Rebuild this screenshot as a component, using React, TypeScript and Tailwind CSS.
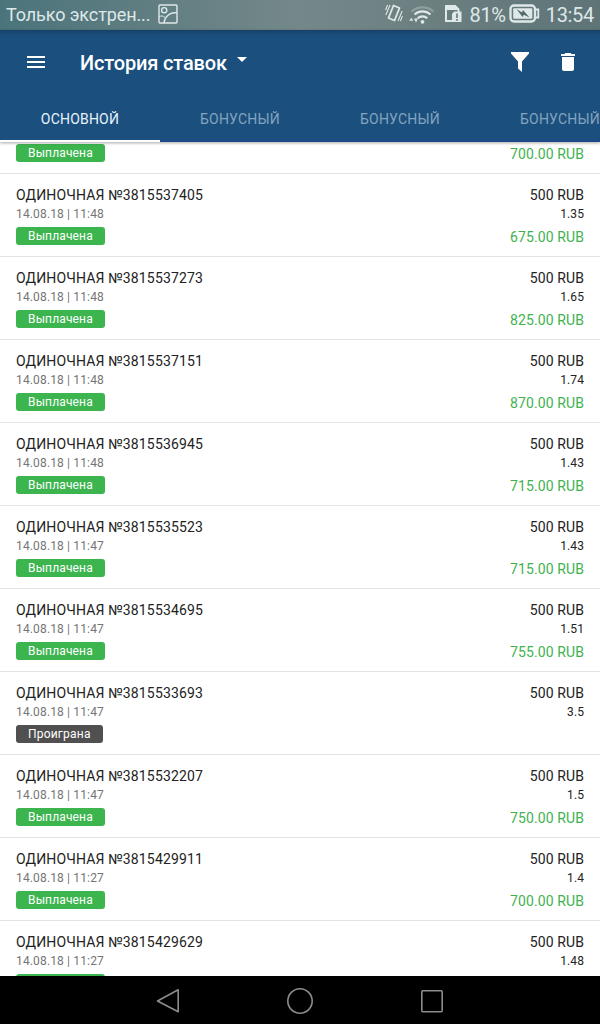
type Bet = {
  id: string
  time: string
  odds: string
  payout?: string
}

const BETS: Bet[] = [
  { id: "3815537405", time: "11:48", odds: "1.35", payout: "675.00" },
  { id: "3815537273", time: "11:48", odds: "1.65", payout: "825.00" },
  { id: "3815537151", time: "11:48", odds: "1.74", payout: "870.00" },
  { id: "3815536945", time: "11:48", odds: "1.43", payout: "715.00" },
  { id: "3815535523", time: "11:47", odds: "1.43", payout: "715.00" },
  { id: "3815534695", time: "11:47", odds: "1.51", payout: "755.00" },
  { id: "3815533693", time: "11:47", odds: "3.5" },
  { id: "3815532207", time: "11:47", odds: "1.5", payout: "750.00" },
  { id: "3815429911", time: "11:27", odds: "1.4", payout: "700.00" },
  { id: "3815429629", time: "11:27", odds: "1.48" , payout: "740.00" },
]

const TABS = ["ОСНОВНОЙ", "БОНУСНЫЙ", "БОНУСНЫЙ", "БОНУСНЫЙ"]

const StatusBar = () => (
  <div className="h-[30px] shrink-0 flex items-center pl-[6px] pr-[6px] text-[#dfe8e9] bg-linear-to-r from-[#4a747b] via-[#758889] to-[#5f7477]">
    <span className="text-[18px] leading-[28px] tracking-[-0.1px] whitespace-nowrap">Только экстрен...</span>
    <svg className="ml-[8px] -mt-[3px]" width="20" height="20" viewBox="0 0 20 20" fill="none" stroke="currentColor" strokeWidth="1.4">
      <rect x="1" y="1" width="18" height="18" rx="1" />
      <circle cx="6.2" cy="6.2" r="2.6" />
      <path d="M6 19c.5-6 5-10.500 13-10.500" />
      <path d="M1 13c2-1.500 4-1.500 6 .5" strokeWidth="1" />
    </svg>
    <svg className="ml-auto -mt-[4px]" width="18" height="22" viewBox="0 0 18 22" fill="none" stroke="currentColor">
      <path d="M8.500 3.500 14.500 6 9.500 18.500 3.500 16z" strokeWidth="1.800" strokeLinejoin="round" />
      <path d="M5 3 .8 13M2.500 3 .6 8M17.200 9 13 19M17.400 14 15.400 19" strokeWidth="1.100" />
    </svg>
    <svg className="ml-[6px] -mt-[1px]" width="26" height="20" viewBox="0 0 26 20" fill="none" stroke="currentColor" strokeWidth="2.200">
      <path d="M2.500 6.500a16.500 16.500 0 0 1 22 0" opacity=".3" />
      <path d="M5.500 9.500a12 12 0 0 1 16 0M8.700 13.200a7 7 0 0 1 9.600 0" />
      <circle cx="13.500" cy="16.800" r="1.900" fill="currentColor" stroke="none" />
      <path d="M.3 15.800 2.300 12.800 4.300 15.800zM5 13.500 9 13.500 7 17.500z" fill="currentColor" stroke="none" />
    </svg>
    <svg className="ml-[9px] -mt-[4px]" width="18" height="19" viewBox="0 0 18 19" fill="none" stroke="currentColor" strokeWidth="2">
      <path d="M8 17H2V2h9l3.500 3.500V8" />
      <path d="M2 1h9l4 4v1H2z" fill="currentColor" stroke="none" />
      <path d="M8 10l2-2.500h7.500V18H8z" fill="currentColor" stroke="none" />
      <path d="M13 9.500v4.500M13 15v1.700" stroke="#62777a" strokeWidth="1.600" />
    </svg>
    <span className="ml-[7px] text-[20px] leading-[30px] tracking-[-0.3px]">81%</span>
    <svg className="ml-[3px] -mt-[3px]" width="31" height="19" viewBox="0 0 31 19" fill="none" stroke="currentColor">
      <rect x="1.500" y="1.500" width="24.500" height="16" rx="3.500" strokeWidth="2.300" />
      <rect x="4.200" y="4.200" width="19.100" height="10.600" rx="1" fill="currentColor" stroke="none" />
      <path d="M27 5.500h2.300v8H27" strokeWidth="1.800" />
      <path d="M7.500 5 13 8.500 14 6 20.500 13.500 14.800 10.800 13.500 13z" fill="#536a6d" stroke="none" />
    </svg>
    <span className="ml-[6px] text-[20px] leading-[30px] tracking-[-0.3px]">13:54</span>
  </div>
)

const Header = () => (
  <header className="relative z-10 h-[112px] shrink-0 flex flex-col bg-[#1b4f7e] text-white shadow-[0_1px_3px_rgba(0,0,0,0.35)]">
    <div className="h-[64px] flex items-center pl-[27px] pr-[25px] bg-linear-to-b from-[#164167] to-[#1b4f7e] to-8%">
      <svg width="18" height="12" viewBox="0 0 18 12" fill="currentColor">
        <path d="M0 0h18v2H0zM0 5h18v2H0zM0 10h18v2H0z" />
      </svg>
      <h1 className="ml-[35px] pt-[2px] text-[20px] font-medium leading-[24px] tracking-[-0.15px]">История ставок</h1>
      <svg className="ml-[10px] -mt-[5px]" width="10" height="5" viewBox="0 0 10 5" fill="currentColor">
        <path d="M0 0h10L5 5z" />
      </svg>
      <svg className="ml-auto" width="18" height="20" viewBox="0 0 18 20" fill="currentColor">
        <path d="M0 0h18v1.500L11 9.500V20L7 16.500V9.500L0 1.500z" />
      </svg>
      <svg className="ml-[32px]" width="14" height="18" viewBox="0 0 14 18" fill="currentColor">
        <path d="M1 16c0 1.100.9 2 2 2h8c1.100 0 2-.9 2-2V4H1v12zM14 1h-3.500l-1-1h-5l-1 1H0v2h14V1z" />
      </svg>
    </div>
    <nav className="h-[48px] flex overflow-hidden text-[14px] leading-[20px] tracking-[0.2px]">
      {TABS.map((tab, i) => (
        <div
          key={i}
          className={i === 0
            ? "w-[160px] shrink-0 pt-[15px] text-center text-[#e8f3fa] border-b-2 border-white"
            : "w-[160px] shrink-0 pt-[15px] text-center text-[#84a4bf] border-b-3 border-[#1c4a86]"}
        >
          {tab}
        </div>
      ))}
    </nav>
  </header>
)

const Status = ({ paid }: { paid: boolean }) => paid
  ? <span className="h-[18px] px-3 rounded-[3px] bg-[#3cb54e] text-[12px] leading-[18px] tracking-[0.15px] text-white">Выплачена</span>
  : <span className="h-[18px] px-3 rounded-[3px] bg-[#505050] text-[12px] leading-[18px] tracking-[0.2px] text-white">Проиграна</span>

const Payout = ({ amount }: { amount: string }) => (
  <span className="text-[14px] leading-[20px] tracking-[0.1px] text-[#3fb250]">{amount} RUB</span>
)

const BetRow = ({ bet }: { bet: Bet }) => (
  <li className="h-[83px] shrink-0 flex justify-between px-4 pt-[11px] border-b border-[#e3e3e3]">
    <div className="flex flex-col items-start">
      <span className="text-[14px] leading-[20px] tracking-[0.15px] text-[#222]">ОДИНОЧНАЯ №{bet.id}</span>
      <span className="pt-px mb-1 text-[12px] leading-[17px] tracking-[0.15px] text-[#757575]">14.08.18 | {bet.time}</span>
      <Status paid={!!bet.payout} />
    </div>
    <div className="flex flex-col items-end">
      <span className="text-[14px] leading-[20px] tracking-[0.1px] text-[#222]">500 RUB</span>
      <span className="pt-px mb-1 text-[12px] leading-[17px] tracking-[0.1px] text-[#222]">{bet.odds}</span>
      {bet.payout && <Payout amount={bet.payout} />}
    </div>
  </li>
)

const NavigationBar = () => (
  <div className="h-12 shrink-0 flex items-center justify-center gap-[106px] bg-black text-[#8c8c8c]">
    <svg width="26" height="28" viewBox="0 0 26 28" fill="none" stroke="currentColor" strokeWidth="1.600" strokeLinejoin="round">
      <path d="M23.200 3.800v22L2.500 15z" />
    </svg>
    <svg width="26" height="28" viewBox="0 0 26 28" fill="none" stroke="currentColor" strokeWidth="1.600">
      <circle cx="13" cy="15" r="12.200" />
    </svg>
    <svg width="26" height="28" viewBox="0 0 26 28" fill="none" stroke="currentColor" strokeWidth="1.600">
      <rect x="2.800" y="4.800" width="20.400" height="21" rx="1" />
    </svg>
  </div>
)

export default function App() {
  return (
    <div className="w-[600px] h-[1024px] flex flex-col overflow-hidden bg-white font-[Roboto,sans-serif]">
      <StatusBar />
      <Header />
      <main className="flex-1 min-h-0 overflow-hidden">
        <ul className="flex flex-col">
          {/* bottom of the row scrolled under the header */}
          <li className="h-[32px] shrink-0 flex items-start justify-between px-4 pt-[2px] border-b border-[#e3e3e3]">
            <Status paid />
            <Payout amount="700.00" />
          </li>
          {BETS.map((bet) => (
            <BetRow key={bet.id} bet={bet} />
          ))}
        </ul>
      </main>
      <NavigationBar />
    </div>
  )
}
